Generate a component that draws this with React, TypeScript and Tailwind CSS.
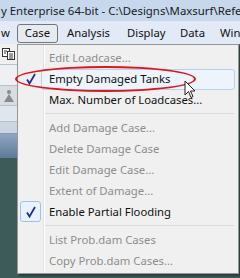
import React from 'react'

const font = { fontFamily: '"Noto Sans", "DejaVu Sans", sans-serif' }

type Item =
  | { kind: 'item'; label: string; disabled?: boolean; checked?: boolean; hot?: boolean }
  | { kind: 'sep' }

const items: Item[] = [
  { kind: 'item', label: 'Edit Loadcase...', disabled: true },
  { kind: 'item', label: 'Empty Damaged Tanks', checked: true, hot: true },
  { kind: 'item', label: 'Max. Number of Loadcases...' },
  { kind: 'sep' },
  { kind: 'item', label: 'Add Damage Case...', disabled: true },
  { kind: 'item', label: 'Delete Damage Case', disabled: true },
  { kind: 'item', label: 'Edit Damage Case...', disabled: true },
  { kind: 'item', label: 'Extent of Damage...', disabled: true },
  { kind: 'item', label: 'Enable Partial Flooding', checked: true },
  { kind: 'sep' },
  { kind: 'item', label: 'List Prob.dam Cases', disabled: true },
  { kind: 'item', label: 'Copy Prob.dam Cases...', disabled: true },
]

function Check() {
  return (
    <svg width="10" height="12" viewBox="0 0 10 12">
      <path d="M1 6.5 L3.5 10.5 L9 1" fill="none" stroke="#1f2f95" strokeWidth="1.8" />
    </svg>
  )
}

function MenuRow({ item }: { item: Item }) {
  if (item.kind === 'sep') {
    return (
      <div className="flex h-[7px] items-center pl-[27px] pr-[4px]">
        <div className="h-px w-full bg-[#d9dadb]" />
      </div>
    )
  }
  return (
    <div className="relative flex h-[21px] items-center">
      {item.hot && (
        <div className="absolute left-[23px] right-[3px] top-[1px] bottom-[-1px] rounded-[3px] border border-[#b6d0f0] bg-[#eef4fb]" />
      )}
      <div className="relative flex w-[25px] justify-center">
        {item.checked &&
          (item.hot ? (
            <Check />
          ) : (
            <div className="flex h-[21px] w-[21px] items-center justify-center rounded-[3px] border border-[#9fc2ec] bg-[#e8f1fc]">
              <Check />
            </div>
          ))}
      </div>
      <span
        className={`relative pl-[6px] text-[11.3px] leading-none ${item.disabled ? 'text-[#8d8d8d]' : 'text-[#111]'}`}
      >
        {item.label}
      </span>
    </div>
  )
}

export default function App() {
  return (
    <div className="relative h-[278px] w-[240px] overflow-hidden bg-[#3c5b59]" style={font}>
      {/* title bar */}
      <div className="flex h-[21px] items-center overflow-hidden bg-[#c7d8ed] text-[11.4px] whitespace-nowrap text-[#1a1a1a]">
        <span className="shrink-0 pl-[1px]">y Enterprise 64-bit - C:\Designs\Maxsurf\Refe</span>
      </div>

      {/* menu bar */}
      <div className="flex h-[23px] items-center overflow-hidden bg-[#e1eaf6] pt-[2px] text-[11.3px] whitespace-nowrap text-[#111]">
        <span className="w-[17px] shrink-0 pl-[1px]">w</span>
        <span className="flex h-[19px] w-[41px] shrink-0 items-center justify-center rounded-[3px] border border-[#6f7680] bg-[#e7ebf0]">
          Case
        </span>
        <span className="w-[69px] shrink-0 pl-[9px]">Analysis</span>
        <span className="w-[53px] shrink-0">Display</span>
        <span className="w-[40px] shrink-0">Data</span>
        <span className="shrink-0">Win</span>
      </div>

      {/* left strip under the menu */}
      <div className="w-[17px]">
        <div className="flex h-[21px] items-center justify-center border-b border-[#b8c0c8] bg-[#f0f0f0]">
          <svg width="13" height="12" viewBox="0 0 13 12">
            <rect x="0.5" y="0.5" width="7" height="8" fill="#fff" stroke="#333" />
            <rect x="5.5" y="3.5" width="7" height="8" fill="#fff" stroke="#333" />
            <path d="M7 6h4M7 8h4M7 10h4M2 3h3M2 5h2" stroke="#333" />
          </svg>
        </div>
        <div className="h-[21px] border-b border-[#b8c0c8] bg-[#eef1f4]" />
        <div className="flex h-[20px] items-center justify-center border-b border-[#b8c0c8] bg-[#d8dde3]">
          <svg width="12" height="14" viewBox="0 0 12 14">
            <circle cx="6" cy="3" r="2" fill="#8a8a8a" />
            <path d="M6 5 L1 13 H11 Z" fill="#8a8a8a" />
          </svg>
        </div>
        <div className="h-[16px] border-b border-[#b8c0c8] bg-[#dfe6ee]" />
        <div className="h-[12px] border-b border-[#8a98a8] bg-[#cbd6e2]" />
        <div className="h-[24px] bg-gradient-to-b from-[#8fa6c2] to-[#5d7a98]" />
      </div>

      {/* dropdown */}
      <div className="absolute left-[17px] top-[44px] h-[230px] w-[222px] border border-[#979797] bg-[#f0f0f0] shadow-[2px_2px_2px_rgba(0,0,0,0.35)]">
        <div className="absolute left-[25px] top-0 bottom-0 w-px bg-[#e2e3e3]" />
        <div className="absolute left-[26px] top-0 bottom-0 w-px bg-white" />
        <div className="relative flex flex-col pt-[2px]">
          {items.map((item, i) => (
            <MenuRow key={i} item={item} />
          ))}
        </div>
      </div>

      {/* red annotation ellipse */}
      <div className="absolute left-[15px] top-[66px] h-[26px] w-[181px] rounded-[50%] border-2 border-[#e0141b]" />

      {/* mouse cursor */}
      <svg className="absolute left-[184px] top-[80px]" width="14" height="20" viewBox="0 0 14 20">
        <path d="M1 1 L1 15 L4.5 11.5 L7 17.5 L9 16.5 L6.5 11 L11 11 Z" fill="#fff" stroke="#222" strokeWidth="1" />
      </svg>
    </div>
  )
}
